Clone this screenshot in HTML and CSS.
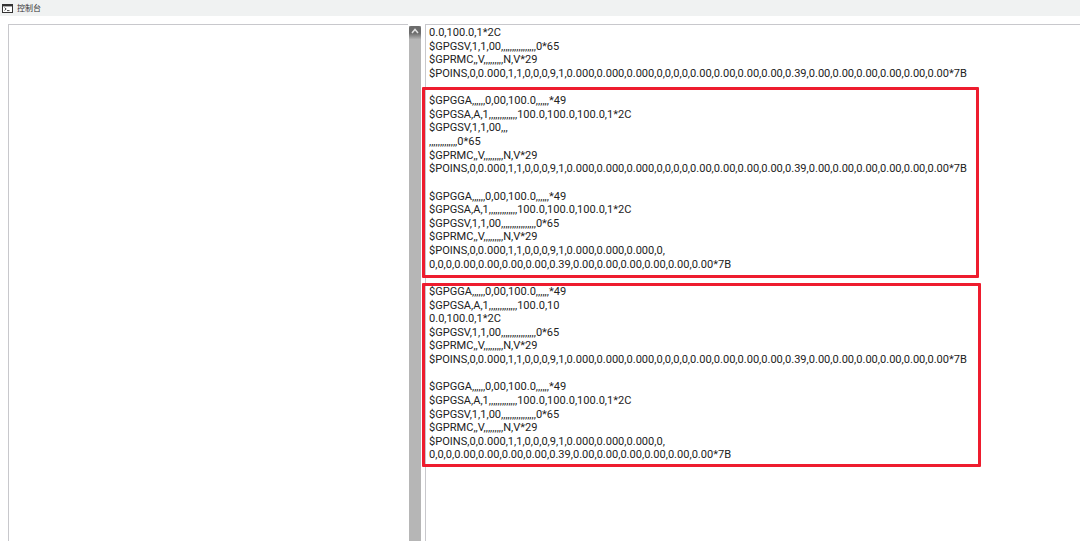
FILE: index.html
```html
<!DOCTYPE html>
<html lang="zh">
<head>
<meta charset="utf-8">
<title>控制台</title>
<link rel="stylesheet" href="styles.css">
</head>
<body>
<header class="titlebar">
  <svg class="term-icon" viewBox="0 0 11 9" width="11" height="9" aria-hidden="true">
    <rect x="0.5" y="0.5" width="10" height="8" fill="#fff" stroke="#333"/>
    <rect x="1" y="1" width="9" height="1.4" fill="#333"/>
    <path d="M2.5 3.6 L4.2 5 L2.5 6.4 M5 6.6 H7.5" fill="none" stroke="#333" stroke-width="0.9"/>
  </svg>
  <span class="title">控制台</span>
</header>
<main class="workspace">
  <section class="list-panel"></section>
  <div class="scrollbar"><div class="scroll-up"><svg viewBox="0 0 8 6" width="8" height="6" aria-hidden="true"><path d="M1 5 L4 1.5 L7 5" fill="none" stroke="#e4e4e4" stroke-width="1.5"/></svg></div></div>
  <section class="console">
<pre class="log">0.0,100.0,1*2C
$GPGSV,1,1,00,,,,,,,,,,,,,,,,0*65
$GPRMC,,V,,,,,,,,,N,V*29
$POINS,0,0.000,1,1,0,0,0,9,1,0.000,0.000,0.000,0,0,0,0,0.00,0.00,0.00,0.00,0.39,0.00,0.00,0.00,0.00,0.00,0.00*7B

$GPGGA,,,,,,0,00,100.0,,,,,,*49
$GPGSA,A,1,,,,,,,,,,,,,100.0,100.0,100.0,1*2C
$GPGSV,1,1,00,,,
,,,,,,,,,,,,,0*65
$GPRMC,,V,,,,,,,,,N,V*29
$POINS,0,0.000,1,1,0,0,0,9,1,0.000,0.000,0.000,0,0,0,0,0.00,0.00,0.00,0.00,0.39,0.00,0.00,0.00,0.00,0.00,0.00*7B

$GPGGA,,,,,,0,00,100.0,,,,,,*49
$GPGSA,A,1,,,,,,,,,,,,,100.0,100.0,100.0,1*2C
$GPGSV,1,1,00,,,,,,,,,,,,,,,,0*65
$GPRMC,,V,,,,,,,,,N,V*29
$POINS,0,0.000,1,1,0,0,0,9,1,0.000,0.000,0.000,0,
0,0,0,0.00,0.00,0.00,0.00,0.39,0.00,0.00,0.00,0.00,0.00,0.00*7B

$GPGGA,,,,,,0,00,100.0,,,,,,*49
$GPGSA,A,1,,,,,,,,,,,,,100.0,10
0.0,100.0,1*2C
$GPGSV,1,1,00,,,,,,,,,,,,,,,,0*65
$GPRMC,,V,,,,,,,,,N,V*29
$POINS,0,0.000,1,1,0,0,0,9,1,0.000,0.000,0.000,0,0,0,0,0.00,0.00,0.00,0.00,0.39,0.00,0.00,0.00,0.00,0.00,0.00*7B

$GPGGA,,,,,,0,00,100.0,,,,,,*49
$GPGSA,A,1,,,,,,,,,,,,,100.0,100.0,100.0,1*2C
$GPGSV,1,1,00,,,,,,,,,,,,,,,,0*65
$GPRMC,,V,,,,,,,,,N,V*29
$POINS,0,0.000,1,1,0,0,0,9,1,0.000,0.000,0.000,0,
0,0,0,0.00,0.00,0.00,0.00,0.39,0.00,0.00,0.00,0.00,0.00,0.00*7B</pre>
    <div class="mark mark-one"></div>
    <div class="mark mark-two"></div>
  </section>
</main>
</body>
</html>
```

FILE: styles.css
```css
html, body {
  margin: 0;
  height: 100%;
  background: #fff;
  overflow: hidden;
}
body {
  display: flex;
  flex-direction: column;
  font-family: "Noto Sans CJK SC", "Noto Sans", sans-serif;
}
.titlebar {
  flex: none;
  height: 16px;
  background: #f0f2f2;
  display: flex;
  align-items: center;
  gap: 4px;
  padding-left: 2px;
}
.term-icon { flex: none; }
.title {
  font-size: 8px;
  line-height: 16px;
  color: #333;
}
.workspace {
  flex: 1;
  display: flex;
  padding: 8px 0 0 8px;
  min-height: 0;
}
.list-panel {
  flex: none;
  width: 399px;
  border-top: 1px solid #c8c8cc;
  border-left: 1px solid #c8c8cc;
  margin-right: 1px;
}
.scrollbar {
  flex: none;
  width: 12px;
  background: #b6b6b6;
  margin-top: 2px;
  margin-right: 4px;
}
.scroll-up {
  height: 13px;
  background: linear-gradient(#6c6c6c 55%, #b0b0b0);
  border-radius: 2px 2px 0 0;
  display: flex;
  align-items: flex-start;
  justify-content: center;
  padding-top: 2px;
  box-sizing: border-box;
}
.console {
  flex: 1;
  position: relative;
  border-top: 1px solid #c8c8cc;
  border-left: 1px solid #c8c8cc;
  padding: 1px 0 0 3px;
}
.log {
  margin: 0;
  font-family: Roboto, "Liberation Sans", sans-serif;
  font-size: 11.07px;
  line-height: 13.62px;
  color: #222;
  white-space: pre;
}
.mark {
  position: absolute;
  border: 3px solid #ee1c2e;
  border-radius: 1px;
  box-sizing: border-box;
}
.mark-one {
  left: -4px;
  top: 62px;
  width: 557px;
  height: 191px;
}
.mark-two {
  left: -4px;
  top: 258px;
  width: 559px;
  height: 184px;
}
```
